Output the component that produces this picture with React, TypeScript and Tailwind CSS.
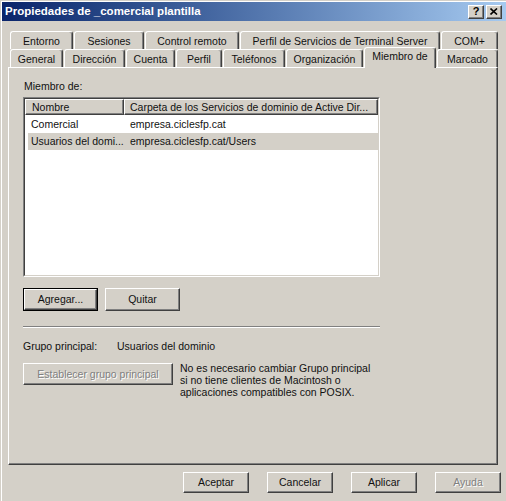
import React from "react";

const raised =
  "border border-t-white border-l-white border-r-[#404040] border-b-[#404040] shadow-[inset_-1px_-1px_0_#808080]";
const disabled = "text-[#808080] [text-shadow:1px_1px_0_#fff]";

function Tab({ label, w, active }: { label: string; w: number; active?: boolean }) {
  return (
    <div
      className={
        "flex shrink-0 items-center justify-center rounded-t-[3px] border-t border-l border-r border-t-white border-l-white border-r-[#404040] shadow-[inset_-1px_0_0_#808080] bg-[#d4d0c8] " +
        (active ? "relative z-10 -mt-[2px] h-[21px] pb-[3px]" : "h-[18px] pt-px")
      }
      style={{ width: w }}
    >
      <span className="whitespace-nowrap">{label}</span>
    </div>
  );
}

function Btn({
  label,
  w,
  h,
  def,
  off,
}: {
  label: string;
  w: number;
  h: number;
  def?: boolean;
  off?: boolean;
}) {
  return (
    <div
      className={"shrink-0 " + (def ? "border border-black" : "")}
      style={{ width: w, height: h }}
    >
      <div className={"flex h-full w-full items-center justify-center " + raised}>
        <span className={off ? disabled : ""}>{label}</span>
      </div>
    </div>
  );
}

const row1: [string, number][] = [
  ["Entorno", 63],
  ["Sesiones", 70],
  ["Control remoto", 94],
  ["Perfil de Servicios de Terminal Server", 200],
  ["COM+", 57],
];

const row2: [string, number][] = [
  ["General", 53],
  ["Dirección", 61],
  ["Cuenta", 49],
  ["Perfil", 46],
  ["Teléfonos", 62],
  ["Organización", 77],
  ["Miembro de", 72],
  ["Marcado", 61],
];

export default function App() {
  return (
    <div className="h-[501px] w-[506px] overflow-hidden bg-[#d4d0c8] pl-[2px] pt-[2px] text-[10.5px] leading-[13px] text-[#111] shadow-[inset_1px_1px_0_#d4d0c8,inset_2px_2px_0_#fff] [font-family:'Liberation_Sans',Arial,sans-serif]">
      {/* title bar */}
      <div className="flex h-[19px] items-center bg-gradient-to-r from-[#0a246a] to-[#a6caf0] pl-[3px] pr-[4px]">
        <span className="text-[11.5px] font-bold text-white">Propiedades de _comercial plantilla</span>
        <div className="ml-auto flex gap-[2px]">
          <div className={"flex h-[14px] w-[16px] items-center justify-center bg-[#d4d0c8] " + raised}>
            <span className="text-[11px] font-bold leading-none text-black">?</span>
          </div>
          <div className={"flex h-[14px] w-[16px] items-center justify-center bg-[#d4d0c8] " + raised}>
            <svg width="8" height="7" viewBox="0 0 8 7">
              <path d="M0.5 0.5 L7 6.5 M7 0.5 L0.5 6.5" stroke="#000" strokeWidth="1.6" />
            </svg>
          </div>
        </div>
      </div>

      {/* tabs */}
      <div className="ml-[8px] mt-[10px] flex gap-px">
        {row1.map(([l, w]) => (
          <Tab key={l} label={l} w={w} />
        ))}
      </div>
      <div className="relative z-10 ml-[8px] flex h-[18px] gap-px">
        {row2.map(([l, w]) => (
          <Tab key={l} label={l} w={w} active={l === "Miembro de"} />
        ))}
      </div>

      {/* panel */}
      <div className="ml-[6px] h-[398px] w-[490px] border border-t-white border-l-white border-r-[#404040] border-b-[#404040] pl-[14px] pt-[12px] shadow-[inset_-1px_-1px_0_#808080]">
        <div className="ml-px">Miembro de:</div>
        <div className="mt-[4px] h-[180px] w-[357px] border border-t-[#808080] border-l-[#808080] border-r-white border-b-white">
          <div className="h-full w-full border border-t-[#404040] border-l-[#404040] border-r-[#d4d0c8] border-b-[#d4d0c8] bg-white">
            <div className="flex h-[16px]">
              <div className={"flex w-[99px] items-center bg-[#d4d0c8] pl-[6px] " + raised}>Nombre</div>
              <div className={"flex flex-1 items-center whitespace-nowrap bg-[#d4d0c8] pl-[5px] " + raised}>
                Carpeta de los Servicios de dominio de Active Dir...
              </div>
            </div>
            <div className="pt-px">
              <div className="flex h-[17px] items-center">
                <span className="w-[105px] pl-[6px]">Comercial</span>
                <span>empresa.ciclesfp.cat</span>
              </div>
              <div className="ml-[3px] flex h-[17px] items-center bg-[#d4d0c8]">
                <span className="w-[102px] pl-[3px]">Usuarios del domi...</span>
                <span>empresa.ciclesfp.cat/Users</span>
              </div>
            </div>
          </div>
        </div>

        <div className="mt-[11px] flex gap-[7px]">
          <Btn label="Agregar..." w={75} h={23} def />
          <Btn label="Quitar" w={75} h={23} />
        </div>

        <div className="mt-[15px] h-[2px] w-[357px] border-t border-b border-t-[#808080] border-b-white" />

        <div className="mt-[12px] flex">
          <span className="w-[94px]">Grupo principal:</span>
          <span>Usuarios del dominio</span>
        </div>

        <div className="mt-[10px] flex gap-[7px]">
          <Btn label="Establecer grupo principal" w={150} h={22} off />
          <p className="-mt-px leading-[12px]">
            No es necesario cambiar Grupo principal
            <br />
            si no tiene clientes de Macintosh o
            <br />
            aplicaciones compatibles con POSIX.
          </p>
        </div>
      </div>

      {/* dialog buttons */}
      <div className="mt-[7px] flex justify-end gap-[18px] pr-[5px]">
        <Btn label="Aceptar" w={66} h={21} />
        <Btn label="Cancelar" w={66} h={21} />
        <Btn label="Aplicar" w={66} h={21} />
        <Btn label="Ayuda" w={66} h={21} off />
      </div>
    </div>
  );
}
